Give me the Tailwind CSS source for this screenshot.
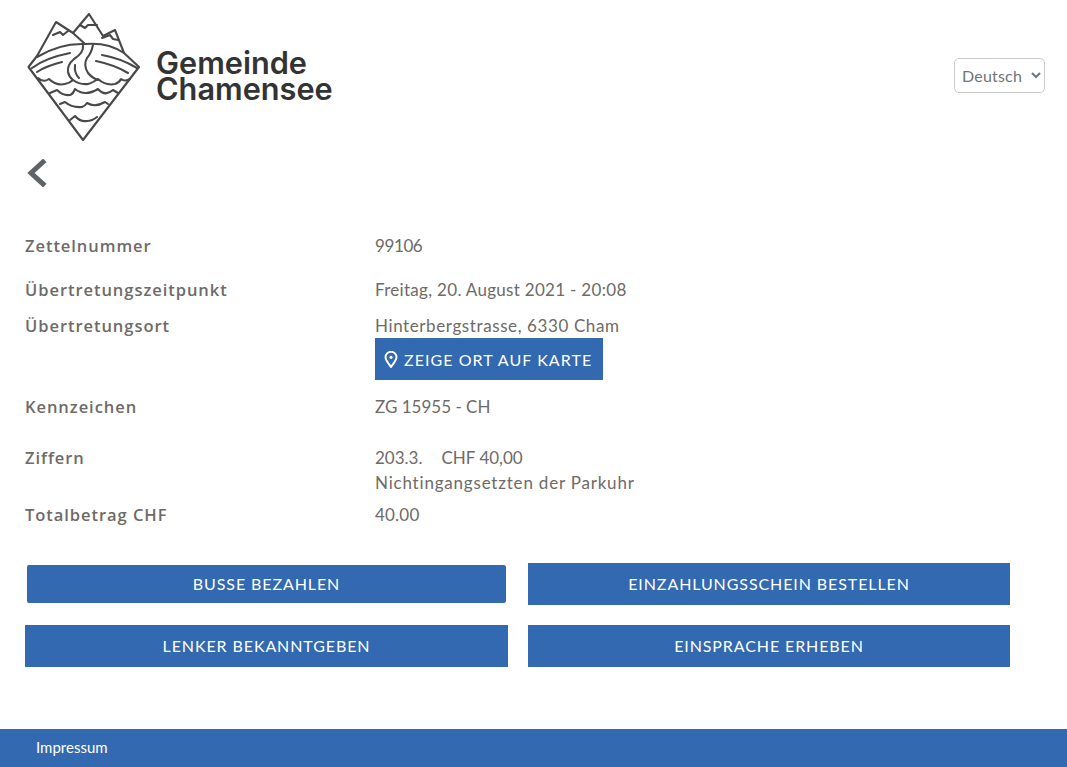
<!DOCTYPE html>
<html lang="de">
<head>
<meta charset="utf-8">
<title>Gemeinde Chamensee</title>
<script src="https://cdn.jsdelivr.net/npm/@tailwindcss/browser@4"></script>
</head>
<body class="bg-white font-['Lato',sans-serif] text-[#6e6a67]">
<div class="h-[767px] w-[1067px] flex flex-col overflow-hidden">
  <header class="flex h-[151px] items-center justify-between pl-[27px] pr-[22px]">
    <div class="flex items-center gap-[16px] pt-[2px]">
      <svg width="113" height="128" viewBox="27 13 113 128" fill="none" stroke="#484848" stroke-width="2.1" stroke-linejoin="round" stroke-linecap="round">
        <path d="M83 140 L28.5 67 L37 56 L56 22 L73 33 L89 14 L103 36 L115 30 L124 53 L139 67 Z"/>
        <path d="M73 33 L85 44"/>
        <path d="M53 35 L60 32 L63 35 L68 31"/>
        <path d="M80 25 L85 28 L88 25 L97 25"/>
        <path d="M102 38 L110 35 L113 39 L118 40"/>
        <path d="M37 57 Q60 43 85 44 Q108 42 124 53"/>
        <path d="M32 68 Q45 58 70 53"/>
        <path d="M37 72 Q46 66 62 62"/>
        <path d="M102 55 Q120 58 137 68"/>
        <path d="M96 61 Q115 65 128 73"/>
        <path d="M83 45 Q84 53 74 59 Q67 65 68 72 Q69 77 73 80"/>
        <path d="M93 45 Q91 54 87 58 Q83 65 88 73 Q92 78 98 80"/>
        <path d="M75 65 Q74 73 79 78"/>
        <path d="M38 78 Q43 83 49 79 Q56 86 65 84 Q70 83 73 80 Q80 85 88 84 Q92 83 98 79 Q106 86 115 84 Q119 83 121 79 Q125 82 130 79"/>
        <path d="M50 93 L57 90 Q63 96 70 95 Q73 94 75 89 Q85 97 98 89 Q105 97 113 90 L118 93"/>
        <path d="M60 104 L65 102 Q72 108 82 107 Q85 106 87 103 Q95 108 105 102 L108 104"/>
        <path d="M70 120 L75 116 Q80 122 87 121 Q92 121 97 117"/>
      </svg>
      <div class="font-['Inter',sans-serif] text-[#333] text-[30.7px] leading-[26px] font-semibold -mt-[1px]">Gemeinde<br>Chamensee</div>
    </div>
    <select class="h-[35px] w-[91px] -mt-[1px] rounded-[5px] border border-[#ccc] bg-white pl-[3px] text-[16px] text-[#6c757d] font-['Lato',sans-serif] tracking-[0.2px]">
      <option>Deutsch</option>
    </select>
  </header>

  <div class="h-[65px] pl-[27px] pt-[8px]">
    <svg width="20" height="28" viewBox="0 0 20 28" fill="none" stroke="#5f6368" stroke-width="5" stroke-linecap="square" stroke-linejoin="miter">
      <path d="M16 3 L4 14 L16 25"/>
    </svg>
  </div>

  <main class="pl-[25px] text-[17px] leading-[25px]">
    <div class="flex h-[44px] pt-[17px]"><div class="w-[350px] font-semibold font-['Open_Sans',sans-serif] text-[16.5px] tracking-[0.95px]">Zettelnummer</div><div class="tracking-[-0.4px]">99106</div></div>
    <div class="flex h-[36px] pt-[17px]"><div class="w-[350px] font-semibold font-['Open_Sans',sans-serif] text-[16.5px] tracking-[0.95px]">Übertretungszeitpunkt</div><div class="tracking-[0.3px]">Freitag, 20. August 2021 - 20:08</div></div>
    <div class="flex h-[84px] pt-[17px]"><div class="w-[350px] font-semibold font-['Open_Sans',sans-serif] text-[16.5px] tracking-[0.95px]">Übertretungsort</div>
      <div>
        <div class="tracking-[0.6px]">Hinterbergstrasse, 6330 Cham</div>
        <a class="flex h-[42px] w-[228px] items-center gap-[6px] bg-[#3269b1] pl-[9px] text-[16px] tracking-[1.05px] text-white">
          <svg width="14" height="17" viewBox="0 0 14 17" fill="none" stroke="white" stroke-width="2"><path d="M7 16 C3.5 11.5 1.5 9 1.5 6.3 A5.5 5.5 0 0 1 12.5 6.3 C12.5 9 10.5 11.5 7 16 Z"/><circle cx="7" cy="6.3" r="1.6" fill="white" stroke="none"/></svg>
          ZEIGE ORT AUF KARTE
        </a>
      </div>
    </div>
    <div class="flex h-[51px] pt-[14px]"><div class="w-[350px] font-semibold font-['Open_Sans',sans-serif] text-[16.5px] tracking-[0.95px]">Kennzeichen</div><div>ZG 15955 - CH</div></div>
    <div class="flex h-[57px] pt-[14px]"><div class="w-[350px] font-semibold font-['Open_Sans',sans-serif] text-[16.5px] tracking-[0.95px]">Ziffern</div>
      <div>
        <div class="flex gap-[19px]"><span>203.3.</span><span>CHF 40,00</span></div>
        <div class="tracking-[0.8px]">Nichtingangsetzten der Parkuhr</div>
      </div>
    </div>
    <div class="flex h-[48px] pt-[14px]"><div class="w-[350px] font-semibold font-['Open_Sans',sans-serif] text-[16.5px] tracking-[0.95px]">Totalbetrag CHF</div><div class="tracking-[0.2px]">40.00</div></div>
  </main>

  <section class="mt-[27px] pl-[25px] grid grid-cols-[483px_482px] gap-x-[20px] gap-y-[20px] text-[16px] tracking-[0.9px] text-white">
    <div class="h-[42px] flex items-center px-[2px]"><a class="flex h-[38px] w-full items-center justify-center rounded-[2px] bg-[#3269b1]">BUSSE BEZAHLEN</a></div>
    <a class="flex h-[42px] items-center justify-center bg-[#3269b1]">EINZAHLUNGSSCHEIN BESTELLEN</a>
    <a class="flex h-[42px] items-center justify-center bg-[#3269b1]">LENKER BEKANNTGEBEN</a>
    <a class="flex h-[42px] items-center justify-center bg-[#3269b1]">EINSPRACHE ERHEBEN</a>
  </section>

  <footer class="mt-auto flex h-[38px] items-center bg-[#3269b1] pl-[36px] pb-[1px] text-[15px] text-white">Impressum</footer>
</div>
</body>
</html>
